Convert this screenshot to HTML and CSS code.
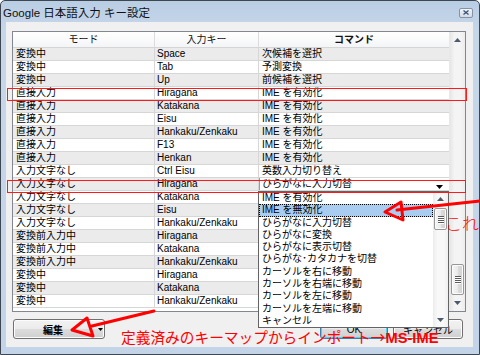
FILE: index.html
```html
<!DOCTYPE html>
<html lang="ja">
<head>
<meta charset="utf-8">
<title>Google 日本語入力 キー設定</title>
<link rel="stylesheet" href="styles.css">
</head>
<body>
<div class="window">
  <div class="titlebar">
    <span class="title">Google 日本語入力 キー設定</span>
    <div class="close"><svg width="6" height="5" viewBox="0 0 6 5"><path d="M0.5 0.5L5.5 4.5M5.5 0.5L0.5 4.5" stroke="#34557f" stroke-width="1.3"/></svg></div>
  </div>
  <div class="client">
    <div class="listview">
      <div class="lv-cols">
        <div class="lv-header">
          <div class="hcell">モード</div>
          <div class="hcell">入力キー</div>
          <div class="hcell bold">コマンド</div>
        </div>
        <div class="lv-body">
          <div class="row alt"><div class="cell">変換中</div><div class="cell">Space</div><div class="cell">次候補を選択</div></div>
          <div class="row"><div class="cell">変換中</div><div class="cell">Tab</div><div class="cell">予測変換</div></div>
          <div class="row alt"><div class="cell">変換中</div><div class="cell">Up</div><div class="cell">前候補を選択</div></div>
          <div class="row"><div class="cell">直接入力</div><div class="cell">Hiragana</div><div class="cell">IME を有効化</div></div>
          <div class="row alt"><div class="cell">直接入力</div><div class="cell">Katakana</div><div class="cell">IME を有効化</div></div>
          <div class="row"><div class="cell">直接入力</div><div class="cell">Eisu</div><div class="cell">IME を有効化</div></div>
          <div class="row alt"><div class="cell">直接入力</div><div class="cell">Hankaku/Zenkaku</div><div class="cell">IME を有効化</div></div>
          <div class="row"><div class="cell">直接入力</div><div class="cell">F13</div><div class="cell">IME を有効化</div></div>
          <div class="row alt"><div class="cell">直接入力</div><div class="cell">Henkan</div><div class="cell">IME を有効化</div></div>
          <div class="row"><div class="cell">入力文字なし</div><div class="cell">Ctrl Eisu</div><div class="cell">英数入力切り替え</div></div>
          <div class="row alt"><div class="cell">入力文字なし</div><div class="cell">Hiragana</div><div class="cell combo">ひらがなに入力切替<svg class="combo-arrow" width="7" height="4" viewBox="0 0 7 4"><path d="M0 0H7L3.5 4Z" fill="#000"/></svg></div></div>
          <div class="row"><div class="cell">入力文字なし</div><div class="cell">Katakana</div><div class="cell"></div></div>
          <div class="row alt"><div class="cell">入力文字なし</div><div class="cell">Eisu</div><div class="cell"></div></div>
          <div class="row"><div class="cell">入力文字なし</div><div class="cell">Hankaku/Zenkaku</div><div class="cell"></div></div>
          <div class="row alt"><div class="cell">変換前入力中</div><div class="cell">Hiragana</div><div class="cell"></div></div>
          <div class="row"><div class="cell">変換前入力中</div><div class="cell">Katakana</div><div class="cell"></div></div>
          <div class="row alt"><div class="cell">変換前入力中</div><div class="cell">Hankaku/Zenkaku</div><div class="cell"></div></div>
          <div class="row"><div class="cell">変換中</div><div class="cell">Hiragana</div><div class="cell"></div></div>
          <div class="row alt"><div class="cell">変換中</div><div class="cell">Katakana</div><div class="cell"></div></div>
          <div class="row"><div class="cell">変換中</div><div class="cell">Hankaku/Zenkaku</div><div class="cell"></div></div>
        </div>
      </div>
      <div class="vscroll">
        <div class="sb-btn"><svg width="7" height="4" viewBox="0 0 7 4"><path d="M3.5 0L7 4H0Z" fill="#4d5a6c"/></svg></div>
        <div class="sb-track grow1"></div>
        <div class="sb-thumb main-thumb"><span class="grip"></span><span class="grip"></span><span class="grip"></span><span class="grip"></span></div>
        <div class="sb-btn"><svg width="7" height="4" viewBox="0 0 7 4"><path d="M0 0H7L3.5 4Z" fill="#4d5a6c"/></svg></div>
      </div>
    </div>
    <div class="buttons">
      <div class="btn btn-split"><span class="btn-label">編集</span><svg class="split-arrow" width="5" height="3" viewBox="0 0 5 3"><path d="M0 0H5L2.5 3Z" fill="#000"/></svg></div>
      <div class="spacer"></div>
      <div class="btn btn-default">OK</div>
      <div class="btn btn-cancel">キャンセル</div>
    </div>
  </div>

  <div class="dropdown">
    <div class="dd-items">
      <div class="dd-item">IME を有効化</div>
      <div class="dd-item selected">IME を無効化</div>
      <div class="dd-item">ひらがなに入力切替</div>
      <div class="dd-item">ひらがなに変換</div>
      <div class="dd-item">ひらがなに表示切替</div>
      <div class="dd-item">ひらがな･カタカナを切替</div>
      <div class="dd-item">カーソルを右に移動</div>
      <div class="dd-item">カーソルを右端に移動</div>
      <div class="dd-item">カーソルを左に移動</div>
      <div class="dd-item">カーソルを左端に移動</div>
      <div class="dd-item">キャンセル</div>
    </div>
    <div class="vscroll dd-scroll">
      <div class="sb-btn small"><svg width="7" height="4" viewBox="0 0 7 4"><path d="M3.5 0L7 4H0Z" fill="#4d5a6c"/></svg></div>
      <div class="sb-thumb dd-thumb"><span class="grip"></span><span class="grip"></span><span class="grip"></span><span class="grip"></span></div>
      <div class="sb-track grow1"></div>
      <div class="sb-btn small"><svg width="7" height="4" viewBox="0 0 7 4"><path d="M0 0H7L3.5 4Z" fill="#4d5a6c"/></svg></div>
    </div>
  </div>

  <div class="annot">
    <div class="redbox box1"></div>
    <div class="redbox box2"></div>
    <svg class="arrows" width="480" height="355" viewBox="0 0 480 355">
      <path d="M480 201L397 210" stroke="#ff0000" stroke-width="3" fill="none" stroke-linecap="round"/>
      <path d="M385 212L401 202L403 220Z" stroke="#ff0000" stroke-width="3" fill="none" stroke-linejoin="round"/>
      <path d="M154 311L92 326" stroke="#ff0000" stroke-width="3" fill="none" stroke-linecap="round"/>
      <path d="M72 330L87 318L93 336Z" stroke="#ff0000" stroke-width="3" fill="none" stroke-linejoin="round"/>
    </svg>
    <div class="kore">これ</div>
    <div class="note">定義済みのキーマップからインポート→<b>MS-IME</b></div>
  </div>
</div>
</body>
</html>
```

FILE: styles.css
```css
* { box-sizing: border-box; margin: 0; padding: 0; }
html, body { width: 480px; height: 355px; overflow: hidden; }
body {
  font-family: "Liberation Sans", "Noto Sans CJK JP", sans-serif;
  font-size: 10px;
  color: #000;
  background: #fff;
}
.window {
  position: relative;
  width: 480px;
  height: 355px;
  border: 1px solid #3e4652;
  border-radius: 5px 5px 0 0;
  background: linear-gradient(#b9cde3, #c7d7ea 30px, #c3d4e8);
  display: flex;
  flex-direction: column;
}
.titlebar {
  height: 21px;
  display: flex;
  align-items: center;
  padding: 0 6px 0 2px;
}
.title {
  flex: 1;
  font-size: 11.5px;
  color: #111;
  padding-top: 1px;
}
.close {
  width: 14px;
  height: 10px;
  border: 1px solid #8593a6;
  border-radius: 2px;
  background: linear-gradient(#f2f4f7, #d3dae3);
  display: flex;
  align-items: center;
  justify-content: center;
  margin-top: 2px;
}
.client {
  flex: 1;
  margin: 0 6px 7px 5px;
  background: #f0f0f0;
  padding: 9px 7px 0 6px;
  display: flex;
  flex-direction: column;
}
.listview {
  height: 281px;
  border: 1px solid #828790;
  background: #fff;
  display: flex;
}
.lv-cols {
  flex: 1;
  display: flex;
  flex-direction: column;
  overflow: hidden;
}
.lv-header {
  height: 16px;
  display: grid;
  grid-template-columns: 142px 104px 1fr;
  background: linear-gradient(#ffffff, #f4f5f7);
  border-bottom: 1px solid #d5d5d5;
}
.hcell {
  border-right: 1px solid #dcdcdc;
  text-align: center;
  line-height: 15px;
  color: #111;
}
.hcell.bold { font-weight: bold; border-right: none; }
.lv-body { flex: 1; overflow: hidden; }
.row {
  height: 13px;
  display: grid;
  grid-template-columns: 142px 104px 1fr;
  border-bottom: 1px solid #d6d6d6;
  background: #fff;
}
.row.alt { background: #ebebeb; }
.cell {
  border-right: 1px solid #d6d6d6;
  line-height: 12px;
  height: 12px;
  padding-left: 3px;
  white-space: nowrap;
  overflow: hidden;
}
.cell:nth-child(2) { padding-left: 2px; }
.cell:last-child { border-right: none; }
.cell.combo {
  background: #fff;
  display: flex;
  align-items: center;
  border-left: 1px solid #9a9a9a;
  padding-left: 2px;
}
.combo-arrow { margin-left: auto; margin-right: 6px; margin-top: 6px; }

.vscroll {
  width: 16px;
  display: flex;
  flex-direction: column;
  background: linear-gradient(to right, #e6e6e6, #f4f4f4 30%, #f4f4f4 70%, #ececec);
  border-left: 1px solid #e8e8e8;
}
.sb-btn {
  height: 16px;
  display: flex;
  align-items: center;
  justify-content: center;
}
.sb-btn.small { height: 14px; }
.grow1 { flex: 1; }
.sb-thumb {
  margin: 0 1px;
  border: 1px solid #979797;
  border-radius: 2px;
  background: linear-gradient(to right, #f6f6f6, #eaeaea 50%, #dcdcdc 51%, #d2d2d2);
  box-shadow: inset 0 0 0 1px #fbfbfb;
  display: flex;
  flex-direction: column;
  align-items: center;
  justify-content: center;
  gap: 1px;
}
.main-thumb { height: 31px; }
.grip {
  width: 6px;
  height: 1px;
  background: #5b5b5b;
  box-shadow: 0 1px 0 #fff;
}

.buttons {
  height: 20px;
  margin-top: 7px;
  display: flex;
  padding-right: 3px;
}
.btn {
  height: 20px;
  border: 1px solid #707070;
  border-radius: 3px;
  background: linear-gradient(#f2f2f2 0, #ebebeb 50%, #dddddd 50%, #cfcfcf 100%);
  box-shadow: inset 0 0 0 1px #fcfcfc;
  display: flex;
  align-items: center;
  justify-content: center;
  font-size: 10px;
}
.btn-split { width: 92px; margin-left: 1px; justify-content: flex-start; }
.btn-label { width: 78px; text-align: center; font-weight: bold; }
.split-arrow { margin-left: 6px; }
.spacer { flex: 1; }
.btn-default {
  width: 68px;
  border-color: #3c7fb1;
  box-shadow: inset 0 0 0 1px #48d3f6;
}
.btn-cancel { width: 70px; margin-left: 5px; }

.dropdown {
  position: absolute;
  left: 257px;
  top: 190px;
  width: 191px;
  height: 137px;
  border: 1px solid #646464;
  background: #fff;
  display: flex;
}
.dd-items { flex: 1; }
.dd-item {
  height: 12.3px;
  line-height: 12px;
  padding-left: 3px;
  white-space: nowrap;
  overflow: hidden;
}
.dd-item.selected {
  background: #a8cdf1;
  outline: 1px dotted #000;
  outline-offset: -1px;
}
.dd-scroll {
  width: 15px;
  border-left: none;
  background: linear-gradient(to right, #ececec, #f8f8f8 30%, #f8f8f8 70%, #f0f0f0);
}
.dd-thumb { height: 22px; margin-top: 2px; }

.annot {
  position: absolute;
  left: -1px;
  top: -1px;
  width: 480px;
  height: 355px;
  pointer-events: none;
}
.redbox {
  position: absolute;
  border: 1px solid #ff1a1a;
}
.box1 { left: 7px; top: 88px; width: 460px; height: 13px; }
.box2 { left: 7px; top: 180px; width: 459px; height: 13px; }
.arrows { position: absolute; left: 0; top: 0; }
.kore {
  position: absolute;
  left: 445px;
  top: 210px;
  font-size: 17px;
  color: #ff0000;
  font-family: "Noto Sans CJK JP", sans-serif;
  font-weight: 300;
}
.note {
  position: absolute;
  left: 121px;
  top: 329px;
  font-size: 14.7px;
  line-height: 16px;
  color: #ff0000;
  font-family: "Noto Sans CJK JP", sans-serif;
  white-space: nowrap;
}
.note b {
  font-family: "Liberation Sans", sans-serif;
  font-weight: bold;
}
```
